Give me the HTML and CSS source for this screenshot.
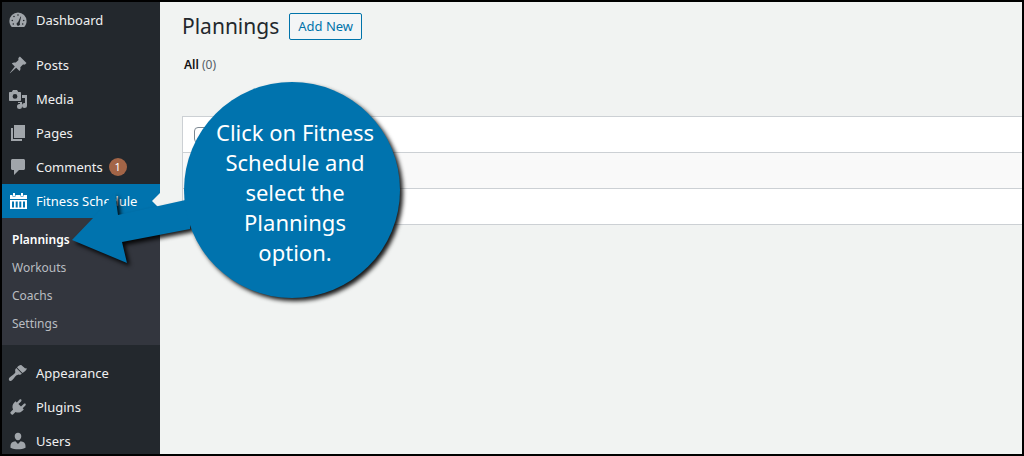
FILE: index.html
```html
<!DOCTYPE html>
<html lang="en">
<head>
  <meta charset="UTF-8">
  <meta name="viewport" content="width=device-width, initial-scale=1.0">
  <title>Plannings</title>
  <link rel="stylesheet" href="styles.css">
</head>
<body>
  <nav class="sidebar" aria-label="Main menu">
    <ul class="menu">
      <li>
        <a href="#" class="menu-item">
          <svg class="icon" viewBox="0 0 20 20"><path fill-rule="evenodd" d="M3.800 17h12.400c1.500-1.700 2.400-3.800 2.400-6a8.600 8.600 0 0 0-17.200 0c0 2.200.9 4.300 2.400 6zM10 4.200a.8.8 0 1 1 0 1.600.8.8 0 0 1 0-1.600zM6 5.700a.8.8 0 1 1 0 1.600.8.8 0 0 1 0-1.600zM4.300 9.700a.8.8 0 1 1 0 1.600.8.8 0 0 1 0-1.600zM15.700 9.700a.8.8 0 1 1 0 1.600.8.8 0 0 1 0-1.600zM12.600 6.500l.5.300-1.400 6.200a1.700 1.700 0 1 1-1.700-.7zM5.300 13.200a.8.8 0 1 1 0 1.600.8.8 0 0 1 0-1.600zM14.700 13.200a.8.8 0 1 1 0 1.600.8.8 0 0 1 0-1.600z"/></svg>
          <span>Dashboard</span>
        </a>
      </li>
      <li class="separator"></li>
      <li>
        <a href="#" class="menu-item">
          <svg class="icon" viewBox="0 0 20 20"><path d="M10.400 3L11.900 1.500 18.500 8.100 17 9.600c-.7.100-1.400.1-2-.1l-2.700 2.700c.4 1.500.2 2.800-.8 3.900l-3.300-3.300L2 18.200 1.800 18l5-6.600-3-3c1.100-1 2.500-1.200 4-.8l2.700-2.700c-.2-.6-.2-1.200-.1-1.900z"/></svg>
          <span>Posts</span>
        </a>
      </li>
      <li>
        <a href="#" class="menu-item">
          <svg class="icon" viewBox="0 0 20 20"><path fill-rule="evenodd" d="M13 11V4c0-.550-.450-1-1-1h-1.700L9 1H5L3.700 3H2c-.550 0-1 .450-1 1v7c0 .550.450 1 1 1h10c.550 0 1-.450 1-1zM7 5a2.400 2.400 0 1 1 0 4.800A2.400 2.400 0 0 1 7 5zM14 6h5v10.500a2.500 2.500 0 1 1-2.500-2.500l.5.100V9h-3zM10 13h4v4.500a2.500 2.500 0 1 1-2.500-2.500H12v-1h-2z"/></svg>
          <span>Media</span>
        </a>
      </li>
      <li>
        <a href="#" class="menu-item">
          <svg class="icon" viewBox="0 0 20 20"><path d="M6 2h11v13H6zM3 5h2v11h9v2H3z"/></svg>
          <span>Pages</span>
        </a>
      </li>
      <li>
        <a href="#" class="menu-item">
          <svg class="icon" viewBox="0 0 20 20"><path d="M4.500 2h11C16.300 2 17 2.700 17 3.500v8c0 .8-.7 1.500-1.500 1.500H11l-5 5v-5H4.500C3.700 13 3 12.300 3 11.500v-8C3 2.700 3.700 2 4.500 2z"/></svg>
          <span>Comments</span>
          <span class="count">1</span>
        </a>
      </li>
      <li>
        <a href="#" class="menu-item current">
          <svg class="icon" viewBox="0 0 20 20"><path fill-rule="evenodd" d="M2 4h2.500v1.500h3V4h5v1.500h3V4H19v4H2zM5 2h2v3H5zM13 2h2v3h-2zM2 9h17v9H2zM4 10.500v6h2v-6zM7.700 10.500v6h2v-6zM11.300 10.500v6h2v-6zM15 10.500v6h2v-6z"/></svg>
          <span>Fitness Schedule</span>
        </a>
        <ul class="submenu">
          <li><a href="#" class="selected">Plannings</a></li>
          <li><a href="#">Workouts</a></li>
          <li><a href="#">Coachs</a></li>
          <li><a href="#">Settings</a></li>
        </ul>
      </li>
      <li class="separator"></li>
      <li>
        <a href="#" class="menu-item">
          <svg class="icon" viewBox="0 0 20 20"><path d="M14.500 9.900L9 4.400C10.200 3.100 12 1.700 13.500 2.200L17 5.300l2 .3c-.7 1.800-2.400 3.500-4.500 4.300zM8.300 5.100l5.600 5.600c-1 1-2.100 1.200-3.200.8L9.300 11.900c-1.600.3-2.700 2.800-5.200 5.300-.9.900-2.200.9-2.800.2-.7-.7-.6-1.900.3-2.800C4 12.200 6.800 11 7.300 9.600L7.200 8c-.2-1 .2-2 1.100-2.900z"/></svg>
          <span>Appearance</span>
        </a>
      </li>
      <li>
        <a href="#" class="menu-item">
          <svg class="icon" viewBox="0 0 20 20"><path d="M13.100 4.400L10.400 7l2.600 2.600 2.700-2.700c.6-.6 1.300-.6 1.800-.1s.4 1.200-.1 1.800l-2.700 2.700 1.100 1.100-1.300 1.300c-1.900 1.900-4.700 2.400-7 1.200L5 17.400c-.4.400-1 .4-1.400 0L2.600 16.400c-.4-.4-.4-1 0-1.400l2.500-2.500c-1.200-2.300-.7-5.100 1.200-7l1.300-1.300 1.200 1.200 2.600-2.700c.6-.6 1.300-.6 1.800-.1s.5 1.200-.1 1.800z"/></svg>
          <span>Plugins</span>
        </a>
      </li>
      <li>
        <a href="#" class="menu-item">
          <svg class="icon" viewBox="0 0 20 20"><path d="M10 9.300c-1.900 0-3.300-1.700-3.300-4S8 1.700 10 1.700s3.300 1.300 3.300 3.600-1.400 4-3.300 4zM7.400 10.200L10 13l2.600-2.800c2.900.3 4.900 1.700 4.900 4.500v2c-2.200 1-4.900 1.500-7.500 1.500s-5.300-.5-7.500-1.500v-2c0-2.800 2-4.200 4.900-4.500z"/></svg>
          <span>Users</span>
        </a>
      </li>
    </ul>
  </nav>

  <main class="content">
    <div class="heading">
      <h1>Plannings</h1>
      <button type="button" class="add-new">Add New</button>
    </div>
    <p class="filters"><a href="#">All</a> <span>(0)</span></p>
    <table class="list">
      <thead>
        <tr><th><input type="checkbox" aria-label="Select all"></th></tr>
      </thead>
      <tbody>
        <tr><td></td></tr>
      </tbody>
      <tfoot>
        <tr><td></td></tr>
      </tfoot>
    </table>
  </main>

  <div class="callout">
    <svg class="bubble" viewBox="0 0 340 230" width="340" height="230">
      <path d="M2 160L24 137 45 113 48 135 120 119V149L52 162 57 183z"/>
      <circle cx="222" cy="110" r="108"/>
    </svg>
    <p class="callout-text">Click on Fitness<br>Schedule and<br>select the<br>Plannings<br>option.</p>
  </div>
</body>
</html>
```
FILE: styles.css
```css
* {
  box-sizing: border-box;
}
body {
  margin: 0;
  height: 100vh;
  display: flex;
  position: relative;
  overflow: hidden;
  border: 2px solid #000;
  background-color: #f1f3f2;
  color: #23282d;
  font-family: 'Noto Sans', 'Open Sans', sans-serif;
  font-size: 13px;
}
ul {
  list-style: none;
  margin: 0;
  padding: 0;
}
a {
  text-decoration: none;
}

/* Sidebar */
.sidebar {
  flex: 0 0 158px;
  overflow: hidden;
  background-color: #23282d;
}
.menu {
  padding-top: 1px;
}
.menu-item {
  display: flex;
  align-items: center;
  position: relative;
  height: 34px;
  padding-left: 6px;
  gap: 8px;
  color: #f0f0f1;
}
.icon {
  width: 20px;
  height: 20px;
  fill: #a0a5aa;
}
.separator {
  height: 11px;
}
.count {
  width: 18px;
  height: 18px;
  margin-left: -2px;
  border-radius: 50%;
  background-color: #a36547;
  color: #fff;
  font-size: 11px;
  line-height: 18px;
  text-align: center;
}
.current {
  background-color: #0073ae;
  color: #fff;
}
.current .icon {
  fill: #fff;
}
.current::after {
  content: '';
  position: absolute;
  right: 0;
  top: 9px;
  border: 8px solid transparent;
  border-left-width: 0;
  border-right-color: #f1f3f2;
}
.submenu {
  padding: 8px 0 7px;
  background-color: #33363e;
}
.submenu a {
  display: block;
  padding-left: 10px;
  color: #b9bdc1;
  font-size: 12px;
  line-height: 28px;
}
.submenu .selected {
  color: #fff;
  font-weight: 600;
}

/* Content */
.content {
  flex: 1;
  padding: 10px 0 0 22px;
}
.heading {
  display: flex;
  align-items: center;
  gap: 10px;
}
h1 {
  margin: 0;
  font-size: 21px;
  font-weight: 400;
  line-height: 28px;
}
.add-new {
  height: 27px;
  padding: 0 8px;
  border: 1px solid #0073aa;
  border-radius: 2px;
  background-color: #f3f5f6;
  color: #0073aa;
  font-family: inherit;
  font-size: 13px;
}
.filters {
  margin: 15px 0 41px 2px;
  color: #555d66;
  font-size: 12px;
  line-height: 20px;
}
.filters a {
  color: #111;
  font-weight: 600;
}
.list {
  width: 100%;
  border-collapse: collapse;
  border-left: 1px solid #ccd0d4;
  background-color: #fff;
}
.list th,
.list td {
  height: 36px;
  padding: 0 11px;
  border-top: 1px solid #ccd0d4;
  border-bottom: 1px solid #ccd0d4;
  text-align: left;
}
.list tbody {
  background-color: #f9f9f9;
}
.list input {
  appearance: none;
  display: block;
  width: 16px;
  height: 16px;
  margin: 0;
  border: 1px solid #7e8993;
  border-radius: 4px;
}

/* Callout with arrow */
.callout {
  position: absolute;
  left: 68px;
  top: 78px;
}
.bubble {
  display: block;
  fill: #0073ae;
  filter: drop-shadow(3px 3px 2px rgba(0, 0, 0, 0.9));
}
.callout-text {
  position: absolute;
  left: 117px;
  top: 37px;
  width: 216px;
  margin: 0;
  color: #fff;
  font-size: 22px;
  line-height: 30px;
  text-align: center;
}
```
